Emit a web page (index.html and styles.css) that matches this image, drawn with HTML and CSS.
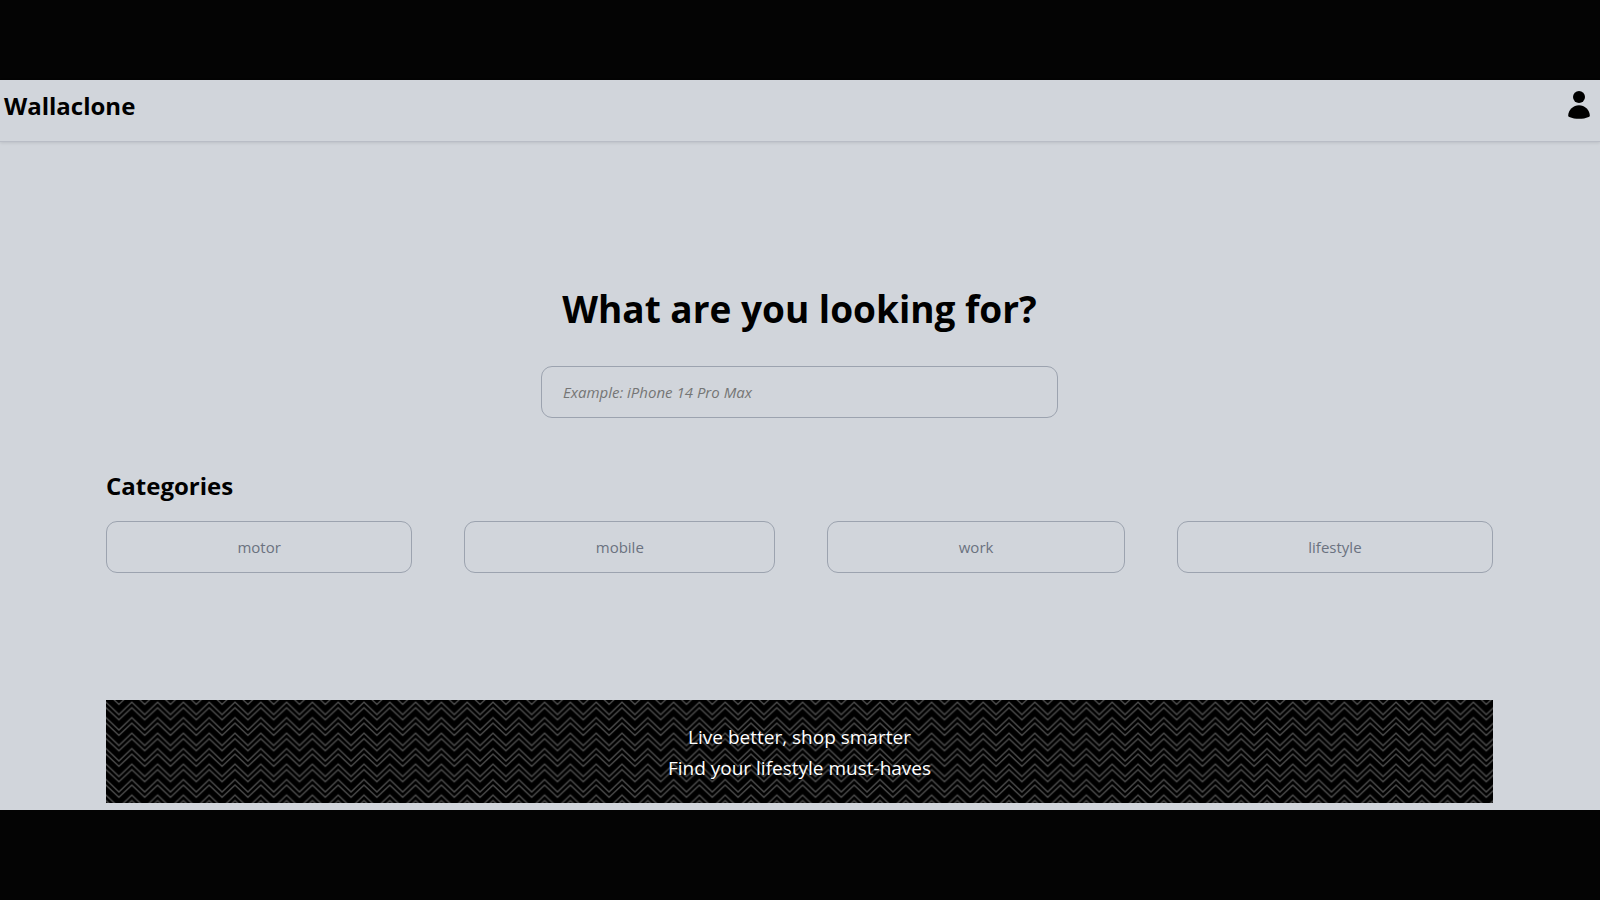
FILE: index.html
```html
<!DOCTYPE html>
<html lang="en">
<head>
<meta charset="utf-8">
<meta name="viewport" content="width=device-width, initial-scale=1">
<title>Wallaclone</title>
<link rel="stylesheet" href="styles.css">
</head>
<body>
<div class="app">
  <header class="header">
    <a class="brand" href="#">Wallaclone</a>
    <button class="account" type="button" aria-label="Account">
      <svg class="account-icon" viewBox="0 0 24 30" aria-hidden="true">
        <circle cx="12" cy="7" r="6"/>
        <path d="M12 15.200C6.500 15.200 1.300 19.500 1.200 25.500C1.200 26.300 1.600 26.600 2.300 26.900C8.200 29.400 15.800 29.400 21.700 26.900C22.400 26.600 22.800 26.300 22.800 25.500C22.700 19.500 17.500 15.200 12 15.200Z"/>
      </svg>
    </button>
  </header>
  <main class="main">
    <form class="search">
      <h1 class="search-title"><label for="q">What are you looking for?</label></h1>
      <input class="search-input" id="q" type="text" placeholder="Example: iPhone 14 Pro Max">
    </form>
    <section class="categories">
      <h2 class="categories-title">Categories</h2>
      <div class="category-list">
        <button class="category" type="button">motor</button>
        <button class="category" type="button">mobile</button>
        <button class="category" type="button">work</button>
        <button class="category" type="button">lifestyle</button>
      </div>
    </section>
    <section class="banner">
      <svg class="banner-pattern" aria-hidden="true">
        <defs>
          <pattern id="zigzag" width="20" height="12" patternUnits="userSpaceOnUse" patternTransform="scale(1.29)">
            <path class="zigzag-line" d="M-2 -8.300L0 -10.300L10 -.700L20 -10.300L22 -8.300M-1 -5L0 -6L10 3.400L20 -6L21 -5M-1 2.700L0 1.700L10 11.300L20 1.700L21 2.700M-1 7L0 6L10 15.400L20 6L21 7"/>
          </pattern>
        </defs>
        <rect width="100%" height="100%" fill="url(#zigzag)"/>
      </svg>
      <p class="banner-line">Live better, shop smarter</p>
      <p class="banner-line">Find your lifestyle must-haves</p>
    </section>
  </main>
</div>
</body>
</html>
```
FILE: styles.css
```css
* { box-sizing: border-box; }

body {
  margin: 0;
  padding: 80px 0 90px;
  min-height: 100vh;
  background: #040404;
  color: #000;
  font-family: "Segoe UI", "Open Sans", "Noto Sans", sans-serif;
}

.app { background: #d1d5db; }

.header {
  display: flex;
  align-items: flex-start;
  justify-content: space-between;
  height: 62px;
  padding: 8px 9px 0 4px;
  border-bottom: 1px solid #b9bdc6;
  box-shadow: 0 1px 3px rgba(0, 0, 0, .1);
}

.brand {
  color: inherit;
  font-size: 24px;
  font-weight: 700;
  line-height: 36px;
  text-decoration: none;
}

.account {
  padding: 2px 0 0;
  border: 0;
  background: none;
  color: inherit;
}

.account-icon {
  display: block;
  width: 24px;
  height: 30px;
  fill: currentColor;
}

.main { padding: 136px 107px 7px 106px; }

.search {
  display: flex;
  flex-direction: column;
  align-items: center;
  gap: 26px;
}

.search-title {
  margin: 0;
  font-size: 37px;
  line-height: 62px;
}

.search-input {
  width: 100%;
  max-width: 517px;
  height: 52px;
  padding: 0 21px;
  border: 1px solid #9ca3af;
  border-radius: 11px;
  background: transparent;
  font: italic 15px "Segoe UI", "Open Sans", "Noto Sans", sans-serif;
}

.search-input::placeholder {
  color: #757575;
  opacity: 1;
}

.categories { padding-top: 48px; }

.categories-title {
  margin: 0 0 15px;
  font-size: 24px;
  line-height: 40px;
}

.category-list {
  display: flex;
  gap: 52px;
}

.category {
  flex: 1 1 auto;
  height: 52px;
  padding: 0 20px;
  border: 1px solid #9ca3af;
  border-radius: 11px;
  background: transparent;
  color: #6b7280;
  font: 15px "Segoe UI", "Open Sans", "Noto Sans", sans-serif;
}

.banner {
  position: relative;
  margin-top: 127px;
  padding: 22px 0 19px;
  background: #000;
  color: #fff;
  font-size: 19px;
  line-height: 31px;
  text-align: center;
}

.banner-pattern {
  position: absolute;
  inset: 0;
  width: 100%;
  height: 100%;
}

.zigzag-line {
  fill: none;
  stroke: #4a4a4a;
  stroke-width: 1.1;
}

.banner-line {
  position: relative;
  margin: 0;
}
```
